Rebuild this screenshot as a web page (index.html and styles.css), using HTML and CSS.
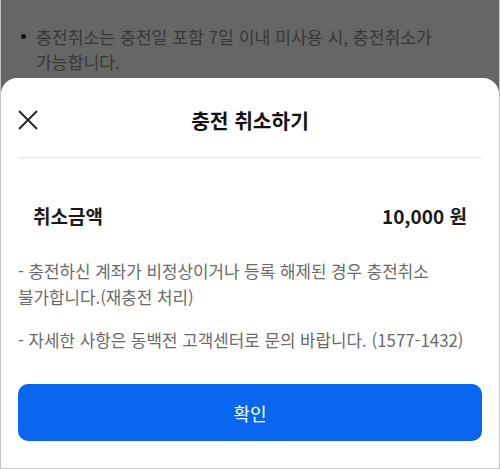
FILE: index.html
```html
<!DOCTYPE html>
<html lang="ko">
<head>
    <meta charset="UTF-8">
    <meta name="viewport" content="width=device-width, initial-scale=1.0">
    <title>충전 취소하기</title>
    <link rel="stylesheet" href="styles.css">
</head>
<body>
    <div class="screen">
        <!-- Page behind the sheet -->
        <ul class="notice">
            <li>충전취소는 충전일 포함 7일 이내 미사용 시, 충전취소가 가능합니다.</li>
        </ul>

        <!-- Dim overlay -->
        <div class="overlay"></div>

        <!-- Bottom sheet -->
        <div class="sheet">
            <div class="sheet-header">
                <button class="close-btn" type="button" aria-label="닫기">
                    <svg width="20" height="20" viewBox="0 0 20 20">
                        <path d="M1 1 L19 19 M19 1 L1 19" stroke="#222" stroke-width="1.8" fill="none"/>
                    </svg>
                </button>
                <h2 class="sheet-title">충전 취소하기</h2>
                <span></span>
            </div>
            <div class="divider"></div>

            <div class="amount-row">
                <span>취소금액</span>
                <span>10,000 원</span>
            </div>

            <p class="note">- 충전하신 계좌가 비정상이거나 등록 해제된 경우 충전취소 불가합니다.(재충전 처리)</p>
            <p class="note note-second">- 자세한 사항은 동백전 고객센터로 문의 바랍니다. (1577-1432)</p>

            <button class="confirm-btn" type="button">확인</button>
        </div>
    </div>
</body>
</html>
```

FILE: styles.css
```css
* {
    box-sizing: border-box;
}

body {
    margin: 0;
    font-family: "Noto Sans CJK KR", "Noto Sans", sans-serif;
    background-color: #fff;
}

.screen {
    position: relative;
    width: 500px;
    height: 469px;
    border: 1px solid #c4c4c4;
    border-top: none;
    overflow: hidden;
    background-color: #fff;
}

/* page content under the overlay */
.notice {
    margin: 0;
    padding: 24px 50px 0 35px;
    list-style: none;
    font-size: 17.2px;
    line-height: 25px;
    color: #8c8c8c;
    word-break: keep-all;
}

.notice li {
    position: relative;
}

.notice li::before {
    content: "";
    position: absolute;
    left: -15px;
    top: 10px;
    width: 5px;
    height: 5px;
    border-radius: 50%;
    background-color: #333;
}

.overlay {
    position: absolute;
    top: 0;
    left: 0;
    width: 100%;
    height: 100%;
    background-color: rgba(0, 0, 0, 0.6);
}

.sheet {
    position: absolute;
    left: 0;
    right: 0;
    bottom: 0;
    height: 390px;
    background-color: #fff;
    border-radius: 16px 16px 0 0;
    padding: 0 17px 27px;
    display: flex;
    flex-direction: column;
}

.sheet-header {
    display: grid;
    grid-template-columns: 1fr auto 1fr;
    align-items: center;
    padding: 30px 0 25px;
    height: 79px;
}

.close-btn {
    justify-self: start;
    border: none;
    background: none;
    padding: 0;
    width: 20px;
    height: 20px;
    display: flex;
}

.sheet-title {
    margin: 0;
    font-size: 20.3px;
    font-weight: 700;
    line-height: 24px;
    color: #111;
}

.divider {
    height: 2px;
    background-color: #f0f0f0;
}

.amount-row {
    display: flex;
    justify-content: space-between;
    margin-top: 44px;
    padding: 0 15px 0 15px;
    font-size: 19px;
    font-weight: 700;
    line-height: 26px;
    color: #1a1a1a;
}

.note {
    margin: 29px 0 0;
    font-size: 16.85px;
    line-height: 26px;
    color: #6a6a6a;
    word-break: keep-all;
}

.note-second {
    margin-top: 17px;
}

.confirm-btn {
    margin-top: auto;
    width: 464px;
    height: 57px;
    border: none;
    border-radius: 10px;
    background-color: #0866ee;
    color: #fff;
    font-family: inherit;
    font-size: 18px;
    font-weight: 400;
}
```
